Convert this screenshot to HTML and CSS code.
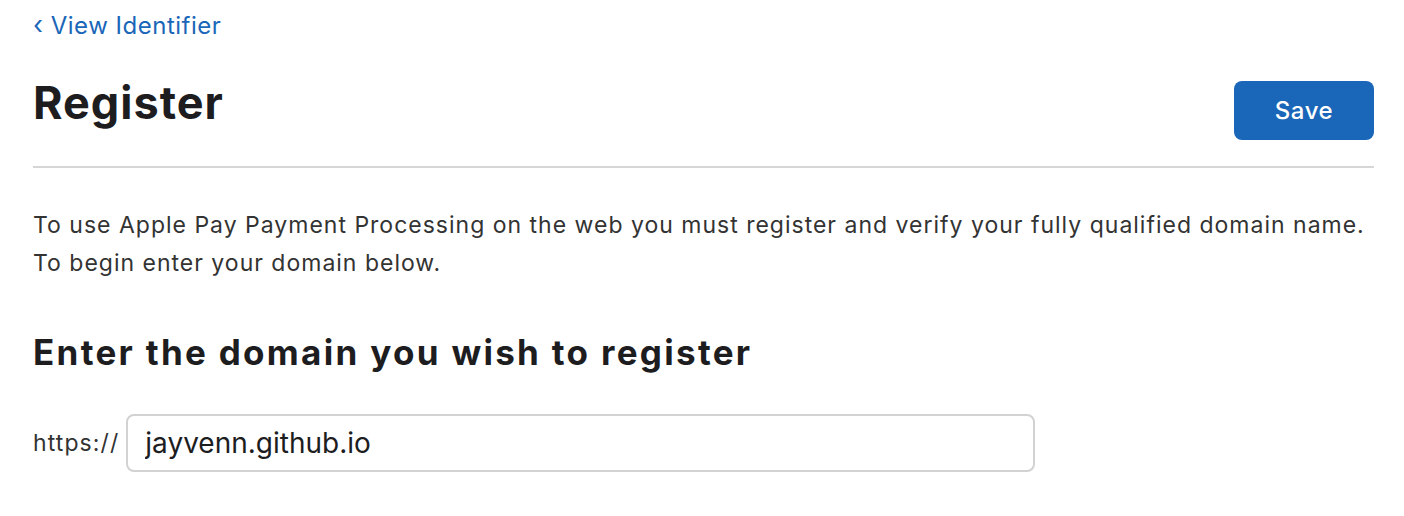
FILE: index.html
```html
<!DOCTYPE html>
<html>
<head>
<meta charset="utf-8">
<link rel="stylesheet" href="styles.css">
</head>
<body>
<div class="page">
  <a class="back" href="#"><span class="chev">‹</span> View Identifier</a>
  <div class="header">
    <h1 class="title">Register</h1>
    <button class="save">Save</button>
  </div>
  <hr class="rule">
  <p class="intro">To use Apple Pay Payment Processing on the web you must register and verify your fully qualified domain name.<br>To begin enter your domain below.</p>
  <h2 class="subtitle">Enter the domain you wish to register</h2>
  <div class="field">
    <span class="prefix">https://</span>
    <input class="domain" type="text" value="jayvenn.github.io">
  </div>
</div>
</body>
</html>
```
FILE: styles.css
```css
html, body {
  margin: 0;
  padding: 0;
  background: #fff;
}
body {
  font-family: Inter, "Noto Sans", sans-serif;
  color: #1d1d1f;
}
.page {
  padding: 8px 30px 0 33px;
}
.back {
  display: inline-block;
  color: #1a66b8;
  text-decoration: none;
  font-size: 24px;
  line-height: 34px;
  letter-spacing: 0.5px;
}
.chev {
  font-size: 26px;
}
.header {
  display: flex;
  align-items: flex-start;
  justify-content: space-between;
  margin-top: 38px;
  height: 59px;
}
.title {
  margin: -1px 0 0 0;
  font-size: 45px;
  line-height: 45px;
  font-weight: 700;
  letter-spacing: 1px;
}
.save {
  width: 140px;
  height: 59px;
  border: none;
  border-radius: 8px;
  background: #1a66b8;
  color: #fff;
  font-family: Inter, sans-serif;
  font-size: 24px;
  font-weight: 500;
  letter-spacing: 0.6px;
}
.rule {
  border: none;
  height: 2px;
  background: #d6d6d6;
  margin: 26px 0 0 0;
}
.intro {
  margin: 39px 0 0 0;
  font-size: 23px;
  line-height: 37.5px;
  letter-spacing: 1px;
  color: #333;
}
.subtitle {
  margin: 49px 0 0 0;
  font-size: 35px;
  line-height: 42px;
  font-weight: 700;
  letter-spacing: 2.3px;
}
.field {
  display: flex;
  align-items: center;
  gap: 7px;
  margin-top: 41px;
}
.prefix {
  font-size: 23px;
  letter-spacing: 1.1px;
  color: #333;
}
.domain {
  width: 909px;
  height: 58px;
  box-sizing: border-box;
  border: 2px solid #d2d2d2;
  border-radius: 8px;
  padding: 0 17px;
  font-family: Inter, sans-serif;
  font-size: 28px;
  color: #1d1d1f;
  outline: none;
}
```
